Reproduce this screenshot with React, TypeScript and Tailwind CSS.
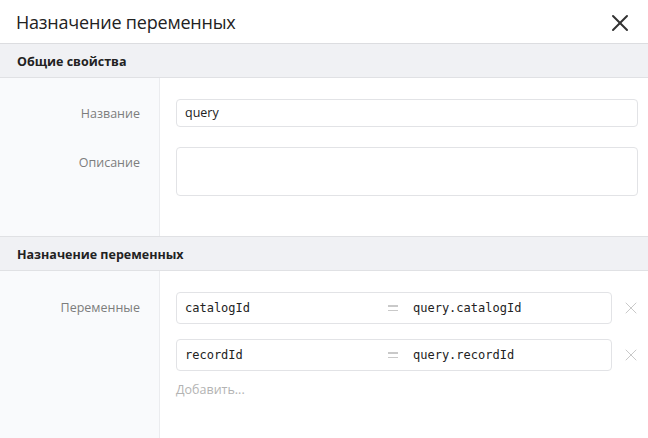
import { X } from "lucide-react";

const font = { fontFamily: "'Open Sans', 'Noto Sans', sans-serif" };
const mono = { fontFamily: "'DejaVu Sans Mono', 'Liberation Mono', monospace" };

interface Binding {
  name: string;
  value: string;
}

const bindings: Binding[] = [
  { name: "catalogId", value: "query.catalogId" },
  { name: "recordId", value: "query.recordId" },
];

const SectionHeader = ({ title }: { title: string }) => (
  <div className="h-[34px] flex items-center pt-[3px] px-[17px] bg-[#f0f1f4] border-b border-[#e0e1e4] text-[12.5px] font-bold text-[#222]">
    {title}
  </div>
);

const Label = ({ text }: { text: string }) => (
  <div className="w-[160px] shrink-0 pr-[20px] text-right text-[12.5px] text-[#7d7d7d]">{text}</div>
);

export default function App() {
  return (
    <div className="w-[648px] h-[438px] bg-white overflow-hidden" style={font}>
      {/* заголовок */}
      <div className="h-[44px] flex items-center justify-between pt-[2px] pl-[16px] pr-[14px] border-b border-[#dcdde0]">
        <h1 className="text-[18px] text-[#222] tracking-[-0.2px]">Назначение переменных</h1>
        <X className="w-[28px] h-[28px] text-[#333]" strokeWidth={1.7} />
      </div>

      <SectionHeader title="Общие свойства" />
      <div className="flex h-[159px] border-b border-[#e0e1e4]">
        <div className="w-[160px] shrink-0 bg-[#f9fafc] border-r border-[#ebecef] pt-[21px] flex flex-col">
          <div className="h-[28px] flex items-center pt-[2px]">
            <Label text="Название" />
          </div>
          <div className="h-[31px] mt-[20px] flex items-center pt-[2px]">
            <Label text="Описание" />
          </div>
        </div>
        <div className="flex-1 pt-[21px] pl-[16px] pr-[10px] flex flex-col gap-[20px]">
          <div className="h-[28px] flex items-center px-[8px] border border-[#e2e3e6] rounded-[4px] text-[12.5px] text-[#222]">
            query
          </div>
          <div className="h-[49px] border border-[#e2e3e6] rounded-[4px]" />
        </div>
      </div>

      <SectionHeader title="Назначение переменных" />
      <div className="flex h-[167px]">
        <div className="w-[160px] shrink-0 bg-[#f9fafc] border-r border-[#ebecef] pt-[21px]">
          <div className="h-[31px] flex items-center pt-[1px]">
            <Label text="Переменные" />
          </div>
        </div>
        <div className="flex-1 pt-[21px] pl-[16px] flex flex-col gap-[15px]">
          {bindings.map((b) => (
            <div key={b.name} className="flex items-center">
              <div
                className="w-[436px] h-[32px] flex items-center border border-[#e2e3e6] rounded-[4px] text-[12px] text-[#222]"
                style={mono}
              >
                <span className="w-[211px] pl-[8px]">{b.name}</span>
                <span className="w-[25px] flex flex-col gap-[3px]">
                  <span className="block w-[10px] h-[1.5px] bg-[#c9c9c9]" />
                  <span className="block w-[10px] h-[1.5px] bg-[#c9c9c9]" />
                </span>
                <span>{b.value}</span>
              </div>
              <X className="ml-[9px] w-[20px] h-[20px] text-[#c4c4c4]" strokeWidth={1.1} />
            </div>
          ))}
          <div className="-mt-[5px] text-[12.5px] text-[#b3b3b3]">Добавить...</div>
        </div>
      </div>
    </div>
  );
}
